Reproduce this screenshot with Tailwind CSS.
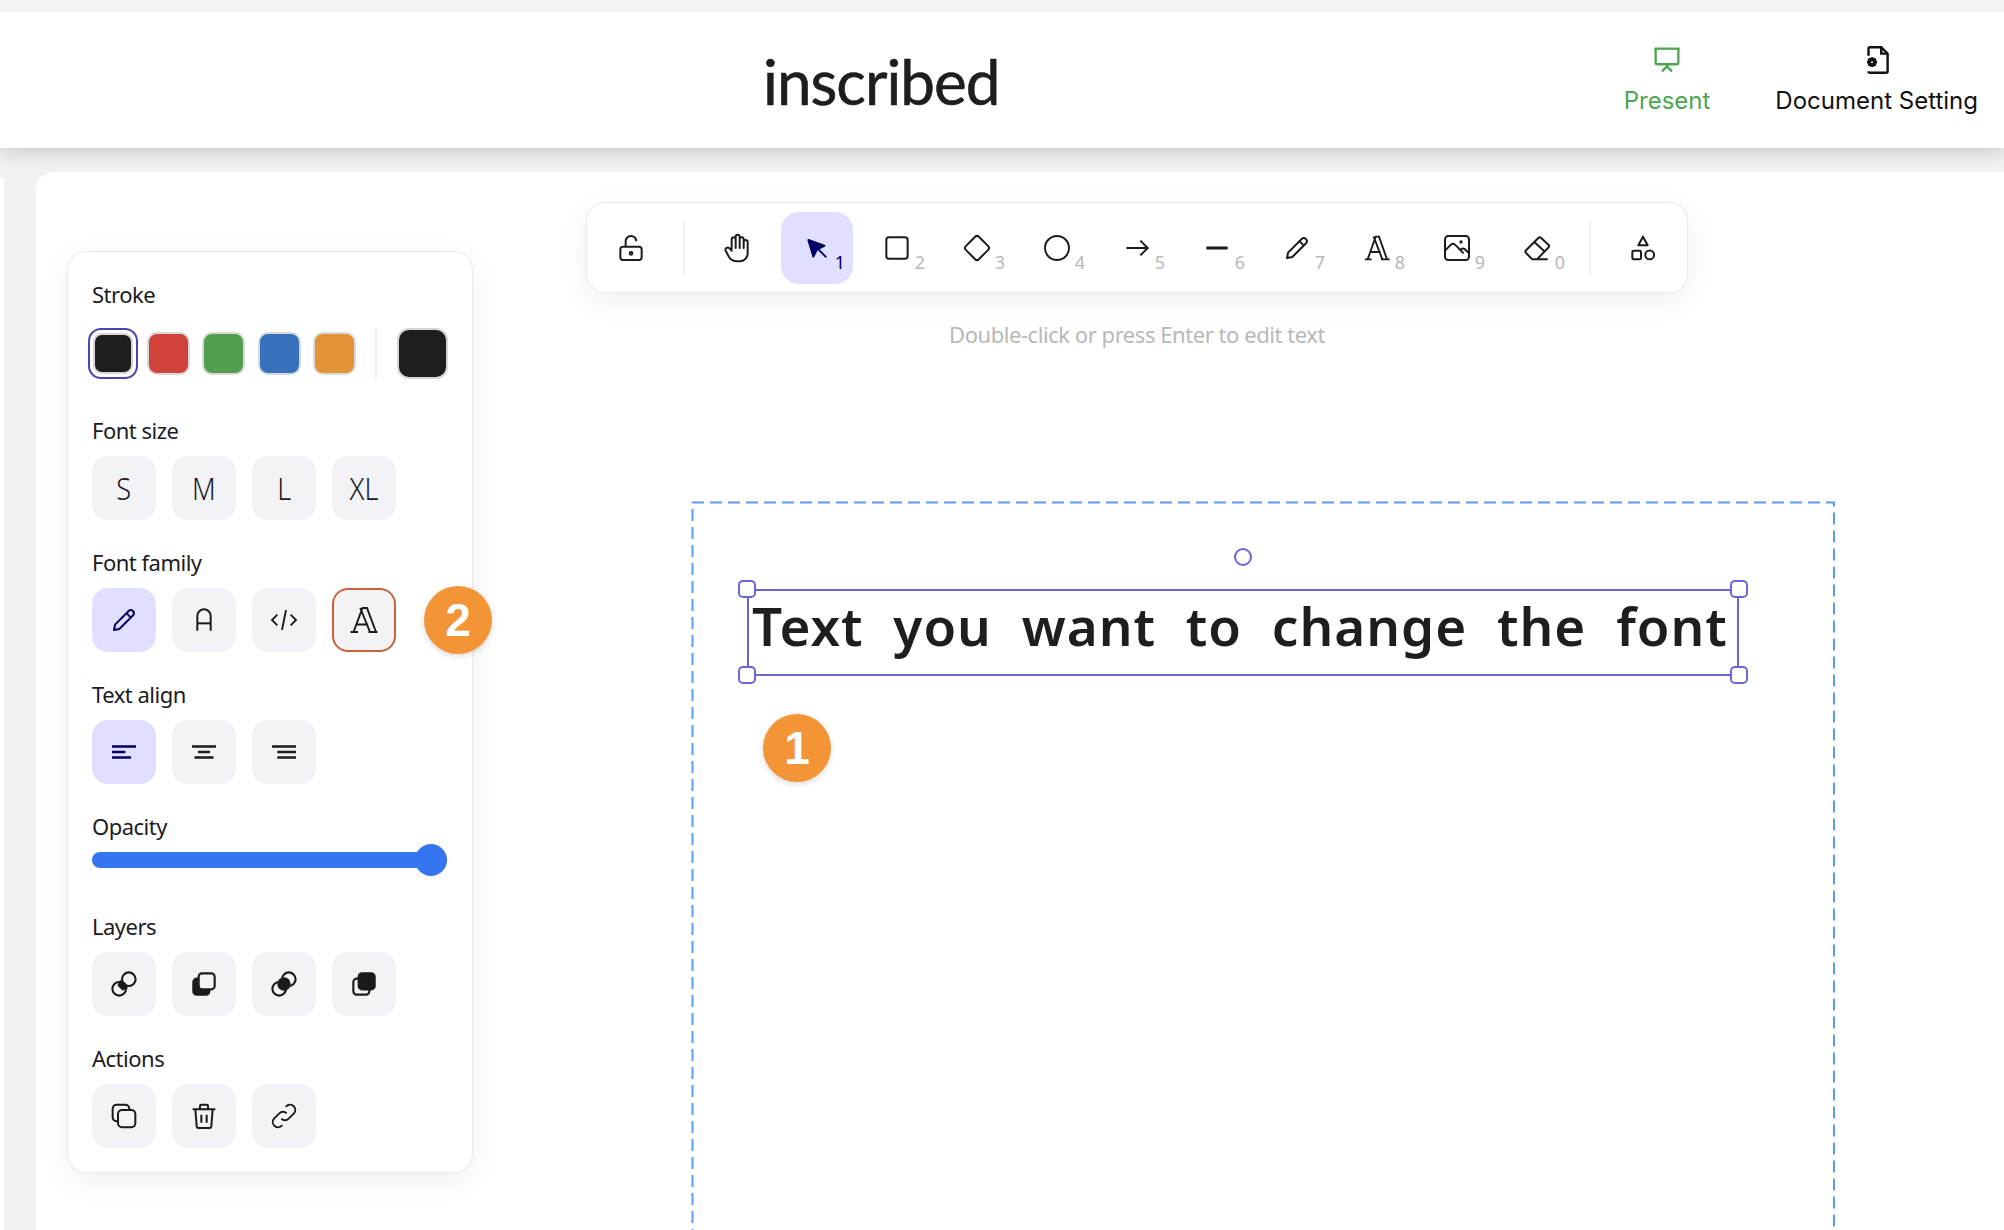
<!doctype html>
<html><head><meta charset="utf-8"><script src="https://cdn.jsdelivr.net/npm/@tailwindcss/browser@4"></script></head>
<body class="bg-[#f1f2f4] w-[2004px] h-[1230px] overflow-hidden font-['Noto_Sans',sans-serif] text-[#1b1b1f]">
<div class="relative z-20 h-[12px] bg-[#f3f4f6]"></div>
<header class="relative z-10 h-[136px] bg-white shadow-[0_4px_20px_rgba(0,0,0,0.18)] flex items-center pl-[763px] pr-[26px]">
  <div class="font-['Lato',sans-serif] font-normal text-[62px] leading-none text-[#1e1e1e] tracking-[-1px] mt-[2px] [-webkit-text-stroke:0.6px_#1e1e1e]">inscribed</div>
  <div class="ml-auto flex gap-[65px] font-['Inter',sans-serif] text-[24px] leading-[30px] -mt-[1px]">
    <div class="flex flex-col items-center gap-[9px] text-[#4ca64f]">
      <svg class="w-[34px] h-[34px]" viewBox="0 0 24 24" fill="none" stroke="currentColor" stroke-width="1.6"><path d="M3 4h18"/><path d="M4 4v10a1 1 0 0 0 1 1h14a1 1 0 0 0 1-1V4"/><path d="M12 15v1.5M8.5 20l3.5-3.5 3.5 3.5"/></svg>
      <span>Present</span>
    </div>
    <div class="flex flex-col items-center gap-[9px] text-[#111]">
      <svg class="w-[34px] h-[34px]" viewBox="0 0 24 24" fill="none" stroke="currentColor" stroke-width="1.7"><path d="M6 9V4a1 1 0 0 1 1-1h8l4.500 4.500V20a1 1 0 0 1-1 1H7a1 1 0 0 1-1-1"/><path d="M15 3v4.500h4.500"/><circle cx="8.500" cy="13.500" r="2" stroke-width="2.600"/><path d="M8.500 10v1.300M8.500 15.700V17M5 13.500h1.300M10.700 13.500H12M6 11l1 1M10 15l1 1M11 11l-1 1M7 15l-1 1" stroke-width="1.500"/></svg>
      <span>Document Setting</span>
    </div>
  </div>
</header>
<main class="relative h-[1082px] flex pt-[24px]">
  <div class="w-[4px] mt-[5px] bg-white rounded-tr-[14px]"></div>
  <div class="ml-[32px] flex-1 bg-white rounded-tl-[18px] relative overflow-hidden flex">
    <!-- panel -->
    <aside class="relative z-10 ml-[32px] mt-[80px] w-[404px] h-[920px] bg-white rounded-[18px] shadow-[0_0_0_1px_#e9e9ee,0_8px_30px_rgba(0,0,0,0.07)] pl-[24px] pt-[27px] flex flex-col text-[22px] tracking-[-0.5px]">
      <div class="h-[32px] leading-[30px] mb-[17px]">Stroke</div>
      <div class="flex items-center h-[51px] -ml-[4px]">
        <div class="w-[50px] h-[51px] rounded-[13px] border-2 border-[#4a47b1] p-[3px] mr-[9px]"><div class="w-[40px] h-[41px] rounded-[9px] bg-[#1e1e1e] border-2 border-[#d6d6d6]"></div></div>
        <div class="w-[43px] h-[43px] rounded-[10px] bg-[#cf433b] border-2 border-[#d9d9d9] mr-[12px]"></div>
        <div class="w-[43px] h-[43px] rounded-[10px] bg-[#529e4e] border-2 border-[#d9d9d9] mr-[13px]"></div>
        <div class="w-[43px] h-[43px] rounded-[10px] bg-[#3770bb] border-2 border-[#d9d9d9] mr-[12px]"></div>
        <div class="w-[43px] h-[43px] rounded-[10px] bg-[#e19336] border-2 border-[#d9d9d9]"></div>
        <div class="w-[2px] h-[51px] bg-[#efeffa] ml-[19px] mr-[20px]"></div>
        <div class="w-[51px] h-[51px] rounded-[12px] bg-[#1e1e1e] border-2 border-[#d6d6d6]"></div>
      </div>
      <div class="h-[32px] leading-[30px] mt-[36px] mb-[9px]">Font size</div>
      <div class="flex gap-[16px] font-['Noto_Sans',sans-serif] font-light text-[32px] tracking-normal text-[#1b1b1f]">
        <div class="w-[64px] h-[64px] rounded-[16px] bg-[#f2f2f7] flex items-center justify-center"><span class="scale-x-[0.85]">S</span></div>
        <div class="w-[64px] h-[64px] rounded-[16px] bg-[#f2f2f7] flex items-center justify-center"><span class="scale-x-[0.85]">M</span></div>
        <div class="w-[64px] h-[64px] rounded-[16px] bg-[#f2f2f7] flex items-center justify-center"><span class="scale-x-[0.85]">L</span></div>
        <div class="w-[64px] h-[64px] rounded-[16px] bg-[#f2f2f7] flex items-center justify-center"><span class="scale-x-[0.85]">XL</span></div>
      </div>
      <div class="h-[32px] leading-[30px] mt-[27px] mb-[9px]">Font family</div>
      <div class="flex gap-[16px]">
        <div class="w-[64px] h-[64px] rounded-[16px] bg-[#e0dfff] flex items-center justify-center text-[#030064]"><svg class="w-[32px] h-[32px]" viewBox="0 0 24 24" fill="none" stroke="currentColor" stroke-width="1.500" stroke-linejoin="round"><path d="M4.500 19.500l.8-4L15.500 5.300a2.300 2.300 0 0 1 3.300 3.200L8.500 18.700z"/><path d="M14 7l3.200 3.200"/></svg></div>
        <div class="w-[64px] h-[64px] rounded-[16px] bg-[#f2f2f7] flex items-center justify-center"><svg class="w-[32px] h-[32px]" viewBox="0 0 24 24" fill="none" stroke="currentColor" stroke-width="1.500"><path d="M7 20V9a5 5 0 0 1 10 0v11"/><path d="M7 14.500h10"/></svg></div>
        <div class="w-[64px] h-[64px] rounded-[16px] bg-[#f2f2f7] flex items-center justify-center"><svg class="w-[32px] h-[32px]" viewBox="0 0 24 24" fill="none" stroke="currentColor" stroke-width="1.400"><path d="M7 8l-4 4 4 4M17 8l4 4-4 4M13.500 4.500l-3 15"/></svg></div>
        <div class="w-[64px] h-[64px] rounded-[16px] bg-[#f2f2f7] border-2 border-[#c8653a] flex items-center justify-center"><svg class="w-[36px] h-[36px]" viewBox="0 0 24 24" fill="none" stroke="currentColor" stroke-width="1.300"><path d="M3 20h5M15 20h6M5 20L11 4h3l6 16M9.500 4l6.500 16M6.800 15h8"/></svg></div>
      </div>
      <div class="h-[32px] leading-[30px] mt-[27px] mb-[9px]">Text align</div>
      <div class="flex gap-[16px]">
        <div class="w-[64px] h-[64px] rounded-[16px] bg-[#e0dfff] flex items-center justify-center text-[#030064]"><svg class="w-[32px] h-[32px]" viewBox="0 0 24 24" fill="none" stroke="currentColor" stroke-width="1.900"><path d="M3 7.800h18M3 12h10M3 16.200h14.300"/></svg></div>
        <div class="w-[64px] h-[64px] rounded-[16px] bg-[#f2f2f7] flex items-center justify-center"><svg class="w-[32px] h-[32px]" viewBox="0 0 24 24" fill="none" stroke="currentColor" stroke-width="1.900"><path d="M3 7.800h18M7.500 12h9M4.900 16.200h14.200"/></svg></div>
        <div class="w-[64px] h-[64px] rounded-[16px] bg-[#f2f2f7] flex items-center justify-center"><svg class="w-[32px] h-[32px]" viewBox="0 0 24 24" fill="none" stroke="currentColor" stroke-width="1.900"><path d="M3 7.800h18M7 12h14M7 16.200h14"/></svg></div>
      </div>
      <div class="h-[32px] leading-[30px] mt-[27px] mb-[1px]">Opacity</div>
      <div class="relative w-[355px] h-[32px] flex items-center">
        <div class="w-full h-[16px] rounded-full bg-[#3575f0]"></div>
        <div class="absolute right-0 top-0 w-[32px] h-[32px] rounded-full bg-[#3575f0]"></div>
      </div>
      <div class="h-[32px] leading-[30px] mt-[35px] mb-[9px]">Layers</div>
      <div class="flex gap-[16px]">
        <div class="w-[64px] h-[64px] rounded-[16px] bg-[#f2f2f7] flex items-center justify-center"><svg class="w-[32px] h-[32px]" viewBox="0 0 24 24" fill="none" stroke="currentColor" stroke-width="1.600"><circle cx="8.400" cy="15.600" r="5.100"/><circle cx="15.600" cy="8.400" r="5.100"/><path d="M9.300 10.300L13.700 14.700 11 16 8 13z" fill="currentColor"/><path d="M9.300 10.300A5.100 5.100 0 0 1 13.700 14.700" fill="currentColor"/></svg></div>
        <div class="w-[64px] h-[64px] rounded-[16px] bg-[#f2f2f7] flex items-center justify-center"><svg class="w-[32px] h-[32px]" viewBox="0 0 24 24" fill="none" stroke="currentColor" stroke-width="1.600" stroke-linejoin="round"><rect x="4" y="8" width="12" height="12" rx="2.500" fill="currentColor"/><rect x="8" y="4" width="12" height="12" rx="2.500" fill="#f2f2f7"/></svg></div>
        <div class="w-[64px] h-[64px] rounded-[16px] bg-[#f2f2f7] flex items-center justify-center"><svg class="w-[32px] h-[32px]" viewBox="0 0 24 24" fill="none" stroke="currentColor" stroke-width="1.600"><circle cx="8.400" cy="15.600" r="5.100"/><circle cx="15.600" cy="8.400" r="5.100"/><circle cx="12" cy="12" r="5" fill="currentColor" stroke="none"/></svg></div>
        <div class="w-[64px] h-[64px] rounded-[16px] bg-[#f2f2f7] flex items-center justify-center"><svg class="w-[32px] h-[32px]" viewBox="0 0 24 24" fill="none" stroke="currentColor" stroke-width="1.600" stroke-linejoin="round"><rect x="4" y="8" width="12" height="12" rx="2.500"/><rect x="8" y="4" width="12" height="12" rx="2.500" fill="currentColor"/></svg></div>
      </div>
      <div class="h-[32px] leading-[30px] mt-[27px] mb-[9px]">Actions</div>
      <div class="flex gap-[16px]">
        <div class="w-[64px] h-[64px] rounded-[16px] bg-[#f2f2f7] flex items-center justify-center"><svg class="w-[32px] h-[32px]" viewBox="0 0 24 24" fill="none" stroke="currentColor" stroke-width="1.500"><rect x="7.500" y="7.500" width="13" height="13" rx="3"/><path d="M16 7.500V6.500a3 3 0 0 0-3-3H6.500a3 3 0 0 0-3 3V13a3 3 0 0 0 3 3h1"/></svg></div>
        <div class="w-[64px] h-[64px] rounded-[16px] bg-[#f2f2f7] flex items-center justify-center"><svg class="w-[32px] h-[32px]" viewBox="0 0 24 24" fill="none" stroke="currentColor" stroke-width="1.500"><path d="M3.500 7h17M5.500 7l1 12.500a1.500 1.500 0 0 0 1.500 1.500h8a1.500 1.500 0 0 0 1.500-1.500L18.500 7M9 7V4.500a1 1 0 0 1 1-1h4a1 1 0 0 1 1 1V7M10 11v6M14 11v6"/></svg></div>
        <div class="w-[64px] h-[64px] rounded-[16px] bg-[#f2f2f7] flex items-center justify-center"><svg class="w-[32px] h-[32px]" viewBox="0 0 24 24" fill="none" stroke="currentColor" stroke-width="1.400"><path d="M10 14a3.800 3.800 0 0 0 5.500 0l4-4a3.900 3.900 0 0 0-5.500-5.500l-.7.700"/><path d="M14 10a3.800 3.800 0 0 0-5.500 0l-4 4a3.900 3.900 0 0 0 5.500 5.500l.7-.7"/></svg></div>
      </div>
    </aside>
    <!-- toolbar column -->
    <section class="ml-[115px] pt-[31px] flex flex-col items-center self-start">
      <div class="w-[1100px] h-[89px] bg-white rounded-[18px] shadow-[0_0_0_1px_#e9e9ee,0_8px_30px_rgba(0,0,0,0.07)] flex items-start pt-[9px] px-[8px] gap-[8px] text-[18px] leading-[18px] text-[#b8b8b8] relative z-10">
        <div class="w-[72px] h-[72px] flex items-center justify-center text-[#1b1b1f]"><svg class="w-[32px] h-[32px]" viewBox="0 0 24 24" fill="none" stroke="currentColor" stroke-width="1.500"><rect x="4" y="11" width="16" height="10" rx="2"/><circle cx="12" cy="16" r="1"/><path d="M8 11V7a4 4 0 0 1 8 0"/></svg></div>
        <div class="w-[2px] h-[54px] mt-[9px] bg-[#efeffa] mx-[8px]"></div>
        <div class="w-[72px] h-[72px] rounded-[18px] flex items-center justify-center text-[#1b1b1f]"><svg class="w-[32px] h-[32px]" viewBox="0 0 24 24" fill="none" stroke="currentColor" stroke-width="1.500" stroke-linecap="round" stroke-linejoin="round"><path d="M8 13V5.500a1.500 1.500 0 0 1 3 0V12M11 5.500v-2a1.500 1.500 0 0 1 3 0V12M14 5.500a1.500 1.500 0 0 1 3 0V12M17 7.500a1.500 1.500 0 0 1 3 0V16a6 6 0 0 1-6 6h-2c-2.800 0-4.500-.9-6-3.200L3.500 14c-.5-1 .2-2 1-2.200.8-.3 1.600 0 2.200.8L8 14"/></svg></div>
        <div class="relative w-[72px] h-[72px] rounded-[18px] bg-[#e0dfff] flex items-center justify-center text-[#030064]"><svg class="w-[32px] h-[32px]" viewBox="0 0 24 24" fill="currentColor" stroke="currentColor" stroke-width="1.500" stroke-linejoin="round" stroke-linecap="round"><path d="M5.500 6l3.800 12.500 2.700-5.500 5.500-2.700z"/><path d="M13 13l5.500 5.500" fill="none"/></svg><span class="absolute right-[8px] bottom-[13px] text-[#030064]">1</span></div>
        <div class="relative w-[72px] h-[72px] rounded-[18px] flex items-center justify-center"><svg class="w-[32px] h-[32px] text-[#1b1b1f]" viewBox="0 0 24 24" fill="none" stroke="currentColor" stroke-width="1.500"><rect x="4" y="4" width="16" height="16" rx="2"/></svg><span class="absolute right-[8px] bottom-[13px]">2</span></div>
        <div class="relative w-[72px] h-[72px] rounded-[18px] flex items-center justify-center"><svg class="w-[32px] h-[32px] text-[#1b1b1f]" viewBox="0 0 24 24" fill="none" stroke="currentColor" stroke-width="1.500"><path d="M10.600 3.600a2 2 0 0 1 2.800 0l7 7a2 2 0 0 1 0 2.800l-7 7a2 2 0 0 1-2.800 0l-7-7a2 2 0 0 1 0-2.800z"/></svg><span class="absolute right-[8px] bottom-[13px]">3</span></div>
        <div class="relative w-[72px] h-[72px] rounded-[18px] flex items-center justify-center"><svg class="w-[32px] h-[32px] text-[#1b1b1f]" viewBox="0 0 24 24" fill="none" stroke="currentColor" stroke-width="1.500"><circle cx="12" cy="12" r="9"/></svg><span class="absolute right-[8px] bottom-[13px]">4</span></div>
        <div class="relative w-[72px] h-[72px] rounded-[18px] flex items-center justify-center"><svg class="w-[32px] h-[32px] text-[#1b1b1f]" viewBox="0 0 24 24" fill="none" stroke="currentColor" stroke-width="1.500"><path d="M4 12h16M14.500 6.500L20 12l-5.500 5.500"/></svg><span class="absolute right-[8px] bottom-[13px]">5</span></div>
        <div class="relative w-[72px] h-[72px] rounded-[18px] flex items-center justify-center"><svg class="w-[32px] h-[32px] text-[#1b1b1f]" viewBox="0 0 24 24" fill="none" stroke="currentColor" stroke-width="2.200"><path d="M4 12h16"/></svg><span class="absolute right-[8px] bottom-[13px]">6</span></div>
        <div class="relative w-[72px] h-[72px] rounded-[18px] flex items-center justify-center"><svg class="w-[32px] h-[32px] text-[#1b1b1f]" viewBox="0 0 24 24" fill="none" stroke="currentColor" stroke-width="1.500" stroke-linejoin="round"><path d="M4.500 19.500l.8-4L15.500 5.300a2.300 2.300 0 0 1 3.300 3.200L8.500 18.700z"/><path d="M14 7l3.200 3.200"/></svg><span class="absolute right-[8px] bottom-[13px]">7</span></div>
        <div class="relative w-[72px] h-[72px] rounded-[18px] flex items-center justify-center"><svg class="w-[32px] h-[32px] text-[#1b1b1f]" viewBox="0 0 24 24" fill="none" stroke="currentColor" stroke-width="1.400"><path d="M3 20.500h5M15 20.500h6.500M5 20.500L11 3.500h2.500l6 17M9.500 3.500l6.500 17M6.800 15h8"/></svg><span class="absolute right-[8px] bottom-[13px]">8</span></div>
        <div class="relative w-[72px] h-[72px] rounded-[18px] flex items-center justify-center"><svg class="w-[32px] h-[32px] text-[#1b1b1f]" viewBox="0 0 24 24" fill="none" stroke="currentColor" stroke-width="1.500"><rect x="3" y="3" width="18" height="18" rx="2.500"/><path d="M3 14l4.500-4.500c1-.9 2-.9 3 0L17 16M14 14l1-1c1-.9 2-.9 3 0l3 3"/><circle cx="15" cy="7.500" r=".5"/></svg><span class="absolute right-[8px] bottom-[13px]">9</span></div>
        <div class="relative w-[72px] h-[72px] rounded-[18px] flex items-center justify-center"><svg class="w-[32px] h-[32px] text-[#1b1b1f]" viewBox="0 0 24 24" fill="none" stroke="currentColor" stroke-width="1.500" stroke-linejoin="round"><path d="M20 20.500H8.500L3.800 15.800a1.500 1.500 0 0 1 0-2.100L13 4.500a1.500 1.500 0 0 1 2.100 0l5.500 5a1.500 1.500 0 0 1 0 2.100L12 20.500"/><path d="M10 7.500l7.500 7"/></svg><span class="absolute right-[8px] bottom-[13px]">0</span></div>
        <div class="w-[2px] h-[54px] mt-[9px] bg-[#efeffa] mx-[8px]"></div>
        <div class="w-[72px] h-[72px] flex items-center justify-center text-[#1b1b1f]"><svg class="w-[32px] h-[32px]" viewBox="0 0 24 24" fill="none" stroke="currentColor" stroke-width="1.500" stroke-linejoin="round"><path d="M12 3.500l3.500 6.500h-7z"/><rect x="4" y="14" width="6.500" height="6.500" rx="1"/><circle cx="17" cy="17.200" r="3.300"/></svg></div>
      </div>
      <div class="mt-[27px] text-[22px] leading-[30px] tracking-[-0.45px] text-[#b8b8b8]">Double-click or press Enter to edit text</div>
    </section>
    <!-- canvas items: card origin is x36 y172 -->
    <svg class="absolute left-[655px] top-[329px] w-[1145px] h-[740px]" viewBox="0 0 1145 740" fill="none"><path d="M1.500 740V1.500H1143V740" stroke="#5b9bef" stroke-width="2" stroke-dasharray="12 6"/></svg>
    <div class="absolute left-[711px] top-[417px] w-[992px] h-[87px] border-2 border-[#6965db]"></div>
    <div class="absolute left-[716px] top-[422px] font-semibold text-[53px] leading-[64px] tracking-[1px] [word-spacing:15px] text-[#1e1e1e] whitespace-nowrap">Text you want to change the font</div>
    <div class="absolute left-[702px] top-[408px] w-[18px] h-[18px] rounded-[5px] bg-white border-2 border-[#6965db]"></div>
    <div class="absolute left-[1694px] top-[408px] w-[18px] h-[18px] rounded-[5px] bg-white border-2 border-[#6965db]"></div>
    <div class="absolute left-[702px] top-[494px] w-[18px] h-[18px] rounded-[5px] bg-white border-2 border-[#6965db]"></div>
    <div class="absolute left-[1694px] top-[494px] w-[18px] h-[18px] rounded-[5px] bg-white border-2 border-[#6965db]"></div>
    <div class="absolute left-[1198px] top-[376px] w-[18px] h-[18px] rounded-full bg-white border-2 border-[#6965db]"></div>
    <div class="absolute left-[727px] top-[542px] w-[68px] h-[68px] rounded-full bg-[#f39536] shadow-[0_2px_6px_rgba(0,0,0,0.15)] flex items-center justify-center text-white font-['Liberation_Sans',sans-serif] font-bold text-[46px] leading-none">1</div>
    <div class="absolute z-20 left-[388px] top-[414px] w-[68px] h-[68px] rounded-full bg-[#f39536] shadow-[0_2px_6px_rgba(0,0,0,0.15)] flex items-center justify-center text-white font-['Liberation_Sans',sans-serif] font-bold text-[46px] leading-none">2</div>
  </div>
</main>
</body></html>
